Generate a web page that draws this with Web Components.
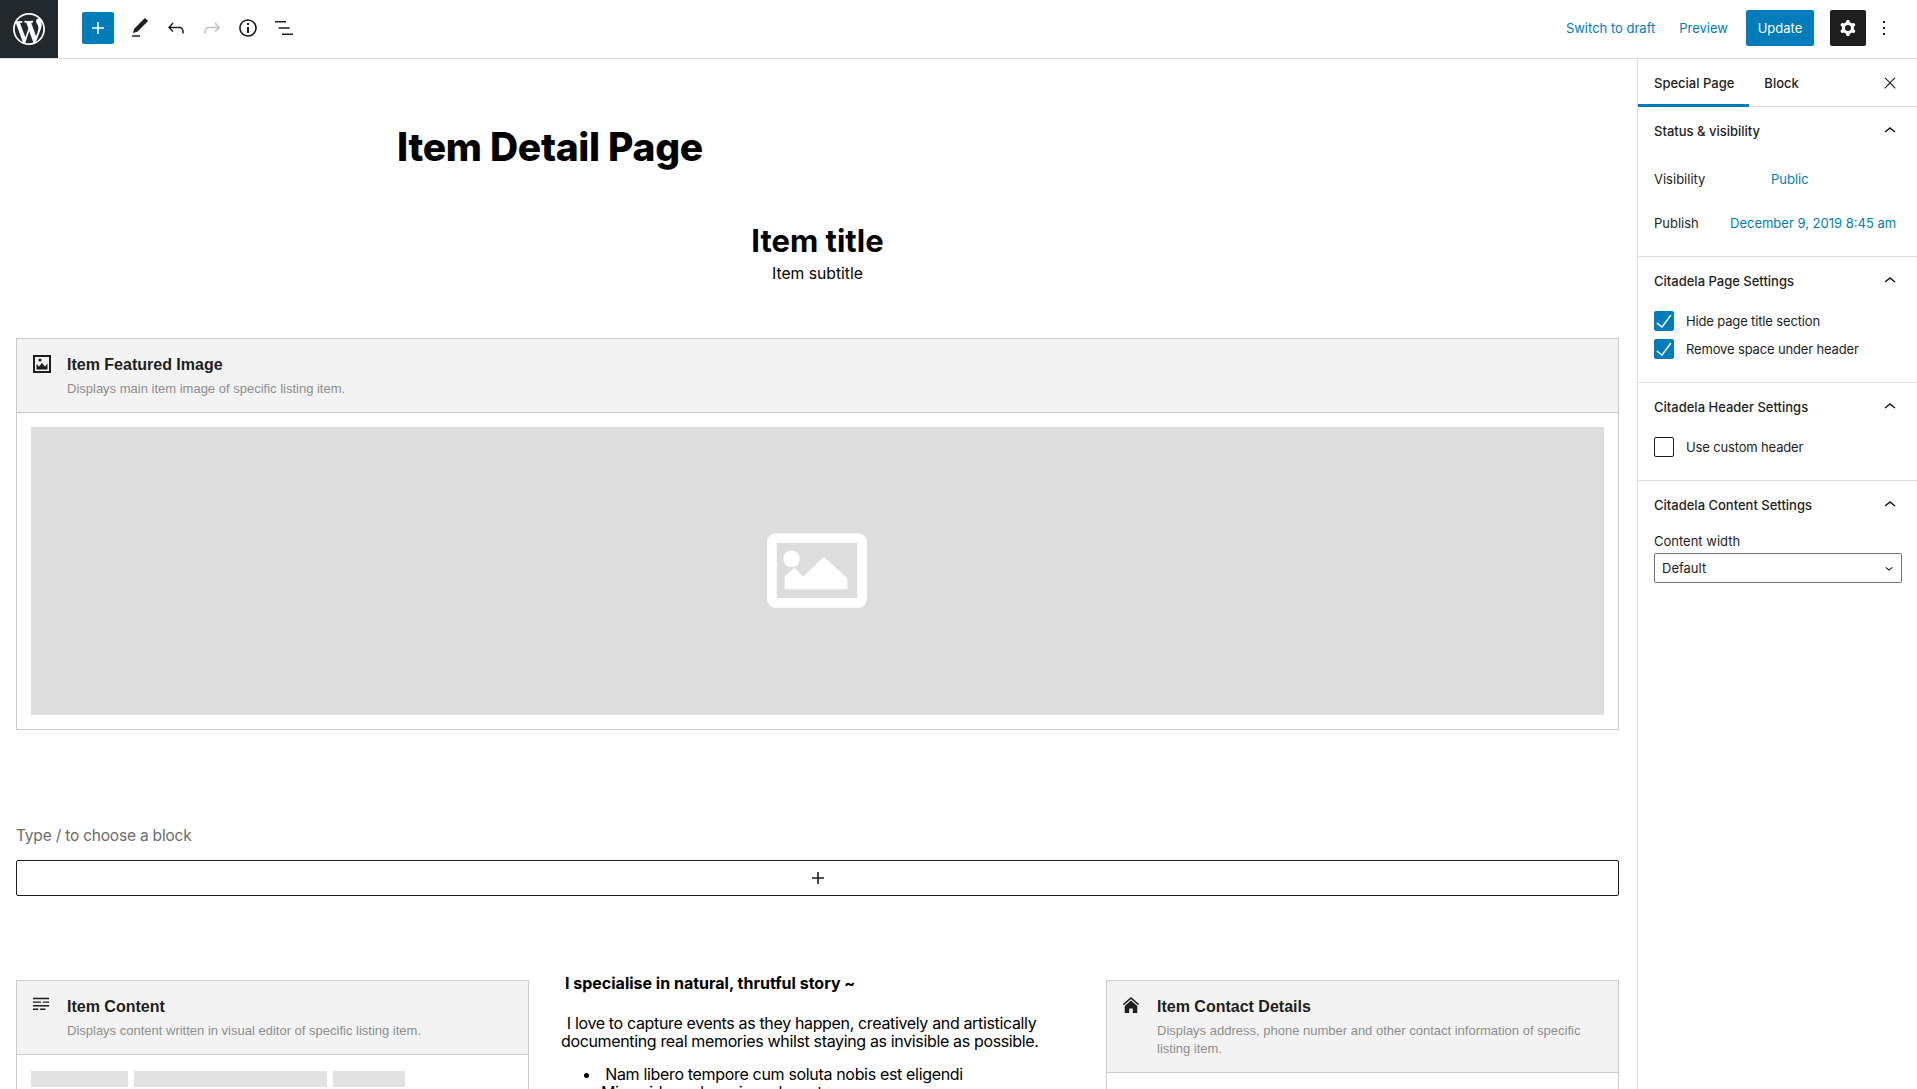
<!DOCTYPE html>
<html lang="en">
<head>
<meta charset="utf-8">
<title>Edit Page</title>
<style>
    html, body {
        margin: 0;
        height: 100%;
        overflow: hidden;
        background: #fff;
        color: #1e1e1e;
        font-family: Inter, "Liberation Sans", sans-serif;
    }
</style>
</head>
<body>
<editor-app></editor-app>

<script>
const ICONS = {
    wp: '<svg viewBox="0 0 20 20" width="32" height="32"><path fill="#fff" d="M20 10c0-5.51-4.49-10-10-10C4.48 0 0 4.49 0 10c0 5.52 4.48 10 10 10 5.51 0 10-4.48 10-10zM7.78 15.37L4.37 6.22c.55-.02 1.17-.08 1.17-.08.5-.06.44-1.13-.06-1.11 0 0-1.45.11-2.37.11-.18 0-.37 0-.58-.01C4.12 2.69 6.87 1.11 10 1.11c2.33 0 4.45.87 6.05 2.34-.68-.11-1.65.39-1.65 1.58 0 .74.45 1.36.9 2.1.35.61.55 1.36.55 2.46 0 1.49-1.4 5-1.4 5l-3.03-8.37c.54-.02.82-.17.82-.17.5-.05.44-1.25-.06-1.22 0 0-1.44.12-2.38.12-.87 0-2.33-.12-2.33-.12-.5-.03-.56 1.2-.06 1.22l.92.08 1.26 3.41zM17.41 10c.24-.64.74-1.87.43-4.25.7 1.29 1.05 2.71 1.05 4.25 0 3.29-1.73 6.24-4.4 7.78.97-2.59 1.94-5.2 2.92-7.78zM6.1 18.09C3.12 16.65 1.11 13.53 1.11 10c0-1.3.23-2.48.72-3.59C3.25 10.3 4.67 14.2 6.1 18.09zm4.03-6.63l2.58 6.98c-.86.29-1.76.45-2.71.45-.79 0-1.57-.11-2.29-.33.81-2.38 1.62-4.74 2.42-7.1z"/></svg>',
    plus: 'M18 11.2h-5.2V6h-1.6v5.2H6v1.6h5.2V18h1.6v-5.2H18z',
    pencil: 'M20.1 5.1L16.9 2 6.2 12.7l-1.3 4.4 4.5-1.3L20.1 5.1zM4 20.8h8v-1.5H4v1.5z',
    undo: 'M18.3 11.7c-.6-.6-1.4-.9-2.3-.9H6.7l2.9-3.3-1.1-1-4.5 5L8.5 16l1-1-2.7-2.7H16c.5 0 .9.2 1.3.5 1 1 1 3.4 1 4.5v.3h1.5v-.2c0-1.5 0-4.3-1.5-5.7z',
    redo: 'M15.6 6.5l-1.1 1 2.9 3.3H8c-.9 0-1.7.3-2.3.9-1.4 1.5-1.4 4.2-1.4 5.6v.2h1.5v-.3c0-1.1 0-3.5 1-4.5.3-.3.7-.5 1.3-.5h9.2L14.5 15l1.1 1.1 4.6-4.6-4.6-5z',
    info: 'M12 3.2c-4.8 0-8.8 3.9-8.8 8.8 0 4.8 3.9 8.8 8.8 8.8 4.8 0 8.8-3.9 8.8-8.8 0-4.8-4-8.8-8.8-8.8zm0 16c-4 0-7.2-3.3-7.2-7.2C4.8 8 8 4.8 12 4.8s7.2 3.3 7.2 7.2c0 4-3.2 7.2-7.2 7.2zM11 17h2v-6h-2v6zm0-8h2V7h-2v2z',
    list: 'M3 5h11v1.5H3zM6.6 11.2h11v1.5h-11zM10 17.5h11V19H10z',
    cog: 'M10.289 4.836A1 1 0 0111.275 4h1.306a1 1 0 01.987.836l.244 1.466c.787.26 1.503.679 2.108 1.218l1.393-.522a1 1 0 011.216.437l.653 1.13a1 1 0 01-.23 1.273l-1.148.944a6.025 6.025 0 010 2.435l1.149.946a1 1 0 01.23 1.272l-.653 1.13a1 1 0 01-1.216.437l-1.394-.522c-.605.54-1.32.958-2.108 1.218l-.244 1.466a1 1 0 01-.987.836h-1.306a1 1 0 01-.986-.836l-.244-1.466a5.995 5.995 0 01-2.108-1.218l-1.394.522a1 1 0 01-1.217-.436l-.653-1.131a1 1 0 01.23-1.272l1.149-.946a6.026 6.026 0 010-2.435l-1.148-.944a1 1 0 01-.23-1.272l.653-1.131a1 1 0 011.217-.437l1.393.522a5.994 5.994 0 012.108-1.218l.244-1.466zM14.929 12a3 3 0 11-6 0 3 3 0 016 0z',
    more: 'M13 19h-2v-2h2v2zm0-6h-2v-2h2v2zm0-6h-2V5h2v2z',
    close: 'M13 11.8l6.1-6.3-1-1-6.1 6.2-6.1-6.2-1 1 6.1 6.3-6.5 6.7 1 1 6.5-6.6 6.5 6.6 1-1z',
    up: 'M6.5 12.4L12 8l5.5 4.4-.9 1.2L12 10l-4.5 3.6-1-1.2z',
    down: 'M17.5 11.6L12 16l-5.5-4.4.9-1.2L12 14l4.5-3.6 1 1.2z',
    check: 'M18.3 5.6L9.9 16.9l-4.6-3.4-.9 1.2 5.8 4.3 9.3-12.6z',
    image: 'M1 1h18v18H1zM3 3v14h14V3zM4.5 15.5V10l2.5 2.5 3-3.5 3 3.5 2.5-3v6zM8 4.4a1.6 1.6 0 1 0 0 3.2a1.6 1.6 0 1 0 0-3.2z',
    lines: 'M1 2h18v1.6H1zM1 6h9v1.6H1zM12 6h7v1.6h-7zM1 10h18v1.6H1zM1 14h6v1.6H1zM9 14h6v1.6H9z',
    home: 'M10 1L1 9l1 1.2L10 3.4l8 6.8 1-1.2zM10 5L3 11v8h5v-5h4v5h5v-8z'
};

const icon = (name, size = 24, fill = "currentColor") =>
    `<svg viewBox="0 0 24 24" width="${size}" height="${size}" fill="${fill}" fill-rule="evenodd"><path d="${ICONS[name]}"/></svg>`;
const icon20 = (name, size, fill = "#1e1e1e") =>
    `<svg viewBox="0 0 20 20" width="${size}" height="${size}" fill="${fill}" fill-rule="evenodd"><path d="${ICONS[name]}"/></svg>`;

class EditorTopbar extends HTMLElement {
    constructor() {
        super();
        this.attachShadow({mode: "open"}).innerHTML = `
            <style>
                :host {
                    display: flex;
                    align-items: center;
                    height: 58px;
                    background: #fff;
                    border-bottom: 1px solid #e0e0e0;
                    font-size: 13px;
                }
                svg { display: block; }
                .logo {
                    width: 58px;
                    height: 58px;
                    background: #23282d;
                    display: grid;
                    place-items: center;
                }
                .tools {
                    display: flex;
                    align-items: center;
                    margin: -2px 0 0 24px;
                    gap: 12px;
                }
                .add {
                    width: 32px;
                    height: 32px;
                    margin-right: 2px;
                    background: #007cba;
                    color: #fff;
                    border-radius: 2px;
                    display: grid;
                    place-items: center;
                }
                .actions {
                    margin: -2px 0 0 auto;
                    display: flex;
                    align-items: center;
                }
                .link { color: #007cba; }
                .preview { margin-left: 24px; }
                .update {
                    margin-left: 18px;
                    width: 68px;
                    height: 36px;
                    background: #007cba;
                    color: #fff;
                    border-radius: 2px;
                    display: grid;
                    place-items: center;
                }
                .cog {
                    margin-left: 16px;
                    width: 36px;
                    height: 36px;
                    background: #1e1e1e;
                    color: #fff;
                    border-radius: 2px;
                    display: grid;
                    place-items: center;
                }
                .more { margin: 0 21px 0 6px; }
            </style>
            <div class="logo">${ICONS.wp}</div>
            <div class="tools">
                <div class="add">${icon("plus")}</div>
                ${icon("pencil")}
                ${icon("undo")}
                ${icon("redo", 24, "#c4c4c4")}
                ${icon("info")}
                ${icon("list")}
            </div>
            <div class="actions">
                <span class="link">Switch to draft</span>
                <span class="link preview">Preview</span>
                <div class="update">Update</div>
                <div class="cog">${icon("cog", 24)}</div>
                <div class="more">${icon("more")}</div>
            </div>`;
    }
}

class SidePanel extends HTMLElement {
    constructor() {
        super();
        this.attachShadow({mode: "open"}).innerHTML = `
            <style>
                :host {
                    display: block;
                    border-bottom: 1px solid #e0e0e0;
                    padding: 0 15px 0 16px;
                    font-size: 13px;
                    color: #1e1e1e;
                }
                header {
                    height: 48px;
                    display: flex;
                    align-items: center;
                    justify-content: space-between;
                    font-weight: 500;
                }
                svg { display: block; }
            </style>
            <header><span>${this.getAttribute("heading")}</span><span>${icon("up")}</span></header>
            <slot></slot>`;
    }
}

class SideRow extends HTMLElement {
    constructor() {
        super();
        this.attachShadow({mode: "open"}).innerHTML = `
            <style>
                :host {
                    display: flex;
                    align-items: center;
                    height: 44px;
                    padding-right: 5px;
                }
                .value {
                    margin-left: auto;
                    color: #007cba;
                    width: ${this.getAttribute("value-width")};
                }
            </style>
            <span>${this.getAttribute("label")}</span>
            <span class="value"><slot></slot></span>`;
    }
}

class SideCheck extends HTMLElement {
    constructor() {
        super();
        const on = this.hasAttribute("checked");
        this.attachShadow({mode: "open"}).innerHTML = `
            <style>
                :host {
                    display: flex;
                    align-items: center;
                    gap: 12px;
                    height: 28px;
                    letter-spacing: -0.15px;
                }
                .box {
                    box-sizing: border-box;
                    width: 20px;
                    height: 20px;
                    border-radius: 2px;
                    border: 1px solid ${on ? "#007cba" : "#1e1e1e"};
                    background: ${on ? "#007cba" : "#fff"};
                    display: grid;
                    place-items: center;
                }
                svg { display: block; margin: -3px; }
            </style>
            <span class="box">${on ? icon("check", 24, "#fff") : ""}</span>
            <span><slot></slot></span>`;
    }
}

class EditorSidebar extends HTMLElement {
    constructor() {
        super();
        this.attachShadow({mode: "open"}).innerHTML = `
            <style>
                :host {
                    display: block;
                    width: 279px;
                    flex: none;
                    box-sizing: content-box;
                    border-left: 1px solid #e0e0e0;
                    background: #fff;
                    font-size: 13px;
                    overflow: hidden;
                }
                svg { display: block; }
                .tabs {
                    height: 47px;
                    display: flex;
                    align-items: stretch;
                    border-bottom: 1px solid #e0e0e0;
                    font-weight: 500;
                }
                .tab {
                    display: flex;
                    align-items: center;
                    padding: 0 15px;
                }
                .tab.active {
                    padding-left: 16px;
                    box-shadow: inset 0 -3px 0 #007cba;
                    margin-bottom: -1px;
                }
                .x { margin-left: auto; margin-right: 18px; align-self: center; }
                .rows { padding: 2px 0 11px; }
                .checks { margin-top: 2px; padding-bottom: 19px; }
                .field { margin-top: 3px; height: 76px; }
                .field label { display: block; line-height: 18px; margin-bottom: 3px; }
                .select {
                    box-sizing: border-box;
                    height: 30px;
                    width: 248px;
                    border: 1px solid #757575;
                    border-radius: 2px;
                    padding: 0 4px 0 7px;
                    display: flex;
                    align-items: center;
                    justify-content: space-between;
                }
            </style>
            <div class="tabs">
                <div class="tab active">Special Page</div>
                <div class="tab">Block</div>
                <div class="x">${icon("close", 18)}</div>
            </div>
            <side-panel heading="Status &amp; visibility">
                <div class="rows">
                    <side-row label="Visibility" value-width="126px">Public</side-row>
                    <side-row label="Publish" value-width="167px">December 9, 2019 8:45 am</side-row>
                </div>
            </side-panel>
            <side-panel heading="Citadela Page Settings">
                <div class="checks">
                    <side-check checked>Hide page title section</side-check>
                    <side-check checked>Remove space under header</side-check>
                </div>
            </side-panel>
            <side-panel heading="Citadela Header Settings">
                <div class="checks">
                    <side-check>Use custom header</side-check>
                </div>
            </side-panel>
            <side-panel heading="Citadela Content Settings" style="border-bottom:0">
                <div class="field">
                    <label>Content width</label>
                    <div class="select"><span>Default</span>${icon("down", 16)}</div>
                </div>
            </side-panel>`;
    }
}

class ListingBlock extends HTMLElement {
    constructor() {
        super();
        this.attachShadow({mode: "open"}).innerHTML = `
            <style>
                :host {
                    display: block;
                    border: 1px solid #ccc;
                    font-family: "Liberation Sans", Arial, sans-serif;
                    background: #fff;
                }
                header {
                    display: flex;
                    background: #f3f3f3;
                    border-bottom: 1px solid #ccc;
                    padding: 14px 15px 14px 15px;
                }
                .icon { width: 35px; flex: none; padding-top: 1px; }
                svg { display: block; }
                h3 {
                    margin: 0;
                    font-size: 16px;
                    line-height: 24px;
                    font-weight: 700;
                    color: #1e1e1e;
                }
                p {
                    margin: 3px 0 0;
                    font-size: 13px;
                    line-height: 18px;
                    color: #8e8e8e;
                }
                .body { padding: 14px; }
            </style>
            <header>
                <div class="icon">${icon20(this.getAttribute("icon"), this.getAttribute("icon") === "image" ? 20 : 18)}</div>
                <div>
                    <h3>${this.getAttribute("heading")}</h3>
                    <p>${this.getAttribute("desc")}</p>
                </div>
            </header>
            <div class="body"><slot></slot></div>`;
    }
}

class EditorCanvas extends HTMLElement {
    constructor() {
        super();
        this.attachShadow({mode: "open"}).innerHTML = `
            <style>
                :host {
                    display: block;
                    flex: 1;
                    min-width: 0;
                    overflow: hidden;
                    background: #fff;
                    color: #000;
                    padding: 0 18px 0 16px;
                }
                h1 {
                    margin: 0;
                    padding-top: 59px;
                    width: 1068px;
                    text-align: center;
                    font-size: 39px;
                    line-height: 58px;
                    font-weight: 800;
                    letter-spacing: -0.3px;
                }
                .item-head {
                    margin-top: 45px;
                    text-align: center;
                }
                .item-head h2 {
                    margin: 0;
                    font-size: 31px;
                    line-height: 40px;
                    font-weight: 700;
                }
                .item-head div {
                    margin-top: 1px;
                    font-size: 15.7px;
                    line-height: 24px;
                }
                .hero {
                    display: block;
                    margin-top: 52px;
                }
                .placeholder {
                    height: 288px;
                    background: #ddd;
                    display: grid;
                    place-items: center;
                }
                .placeholder svg { margin: 0 2px 1px 0; }
                .type {
                    margin-top: 94px;
                    font-size: 15.5px;
                    letter-spacing: -0.2px;
                    line-height: 24px;
                    color: #6c6c6c;
                }
                .appender {
                    box-sizing: border-box;
                    margin-top: 12px;
                    height: 36px;
                    border: 1px solid #1e1e1e;
                    border-radius: 2px;
                    display: grid;
                    place-items: center;
                    color: #1e1e1e;
                }
                svg { display: block; }
                .cols {
                    margin-top: 84px;
                    display: grid;
                    grid-template-columns: 513px minmax(0, 1fr) 513px;
                    align-items: start;
                }
                .bars { display: flex; gap: 6px; margin-top: 2px; }
                .bars i { display: block; height: 16px; background: #e2e2e2; }
                .story {
                    padding: 0 68px 0 32px;
                    font-size: 16px;
                    line-height: 18px;
                    text-align: center;
                    white-space: nowrap;
                }
                .story h4 {
                    margin: -6px 0 0 4px;
                    font-size: 16px;
                    line-height: 18px;
                    font-weight: 700;
                    text-align: left;
                }
                .story p { margin: 22px 0 0; letter-spacing: -0.35px; }
                .story ul {
                    margin: 15px 0 0;
                    padding: 0 0 0 40px;
                    text-align: left;
                    letter-spacing: -0.33px;
                }
            </style>
            <h1>Item Detail Page</h1>
            <div class="item-head">
                <h2>Item title</h2>
                <div>Item subtitle</div>
            </div>
            <listing-block class="hero" icon="image" heading="Item Featured Image" desc="Displays main item image of specific listing item.">
                <div class="placeholder">
                    <svg width="100" height="75" viewBox="0 0 102 76">
                        <path fill="#fff" fill-rule="evenodd" d="M9 0h84a9 9 0 0 1 9 9v58a9 9 0 0 1-9 9H9a9 9 0 0 1-9-9V9a9 9 0 0 1 9-9zM10 10v56h82V10z"/>
                        <circle cx="25" cy="26" r="8.5" fill="#fff"/>
                        <path fill="#fff" d="M18 57V44l10-9 9 9 21-20 24 22v11z"/>
                    </svg>
                </div>
            </listing-block>
            <div class="type">Type / to choose a block</div>
            <div class="appender">${icon("plus")}</div>
            <div class="cols">
                <listing-block icon="lines" heading="Item Content" desc="Displays content written in visual editor of specific listing item.">
                    <div class="bars"><i style="width:97px"></i><i style="width:193px"></i><i style="width:72px"></i></div>
                </listing-block>
                <div class="story">
                    <h4>I specialise in natural, thrutful story ~</h4>
                    <p>&nbsp;I love to capture events as they happen, creatively and artistically<br>documenting real memories whilst staying as invisible as possible.</p>
                    <ul>
                        <li>&nbsp;Nam libero tempore cum soluta nobis est eligendi<br>Minus id quod maxime placeat</li>
                    </ul>
                </div>
                <listing-block icon="home" heading="Item Contact Details" desc="Displays address, phone number and other contact information of specific listing item."></listing-block>
            </div>`;
    }
}

class EditorApp extends HTMLElement {
    constructor() {
        super();
        this.attachShadow({mode: "open"}).innerHTML = `
            <style>
                :host {
                    display: flex;
                    flex-direction: column;
                    height: 100vh;
                    overflow: hidden;
                }
                .main {
                    flex: 1;
                    min-height: 0;
                    display: flex;
                }
            </style>
            <editor-topbar></editor-topbar>
            <div class="main">
                <editor-canvas></editor-canvas>
                <editor-sidebar></editor-sidebar>
            </div>`;
    }
}

customElements.define("side-panel", SidePanel);
customElements.define("side-row", SideRow);
customElements.define("side-check", SideCheck);
customElements.define("listing-block", ListingBlock);
customElements.define("editor-topbar", EditorTopbar);
customElements.define("editor-sidebar", EditorSidebar);
customElements.define("editor-canvas", EditorCanvas);
customElements.define("editor-app", EditorApp);
</script>
</body>
</html>
